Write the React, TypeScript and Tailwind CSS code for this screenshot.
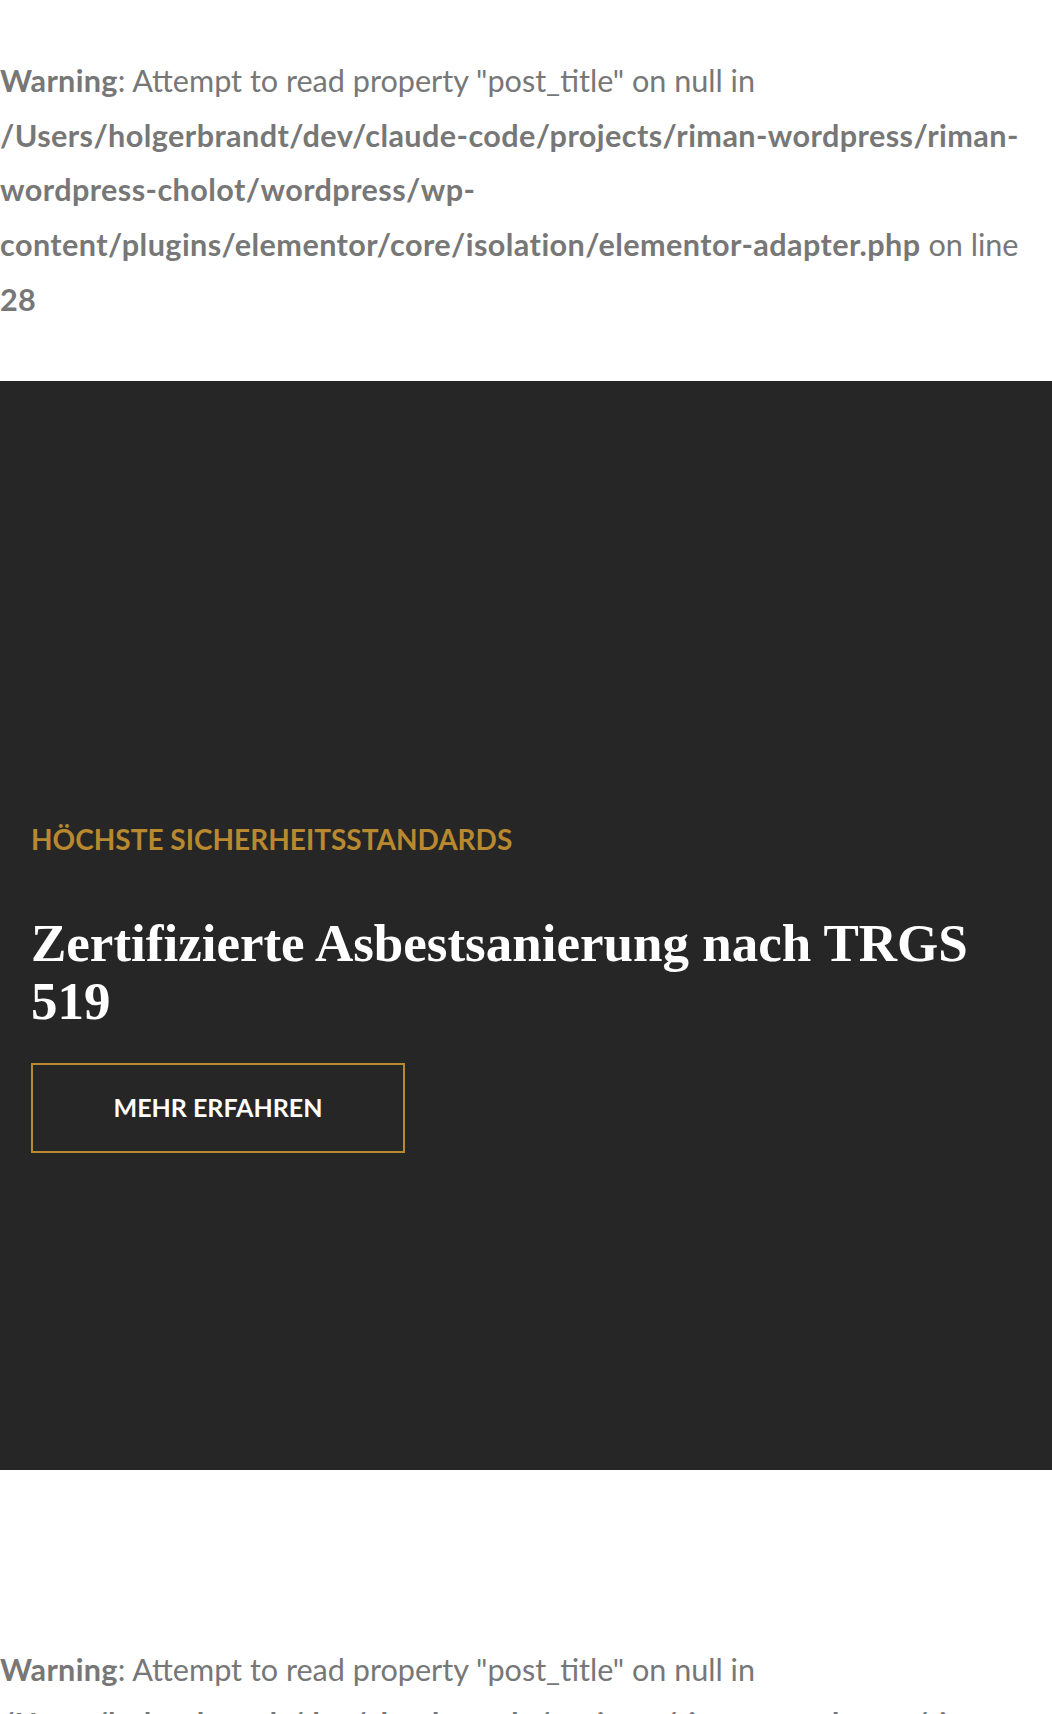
import React from "react";

function WarningBlock() {
  return (
    <p className="whitespace-nowrap font-['Lato','Liberation_Sans',sans-serif] text-[30.6px] leading-[54.7px] text-[#777777]">
      <b className="font-bold tracking-[0.3px]">Warning</b>: Attempt to read property "post_title" on null in
      <br />
      <b className="font-bold tracking-[0.42px]">
        /Users/holgerbrandt/dev/claude-code/projects/riman-wordpress/riman-
        <br />
        wordpress-cholot/wordpress/wp-
        <br />
        content/plugins/elementor/core/isolation/elementor-adapter.php
      </b>{" "}
      on line
      <br />
      <b className="font-bold tracking-[0.3px]">28</b>
    </p>
  );
}

export default function App() {
  return (
    <div className="w-[1052px] overflow-hidden bg-white">
      <div className="pt-[54px] pb-[53px]">
        <WarningBlock />
      </div>

      <section className="bg-[#262626] pl-[31px] pt-[444px] pb-[317px]">
        <p className="font-['Lato','Liberation_Sans',sans-serif] text-[28px] font-bold uppercase leading-[28px] text-[#b8892e]">
          Höchste Sicherheitsstandards
        </p>
        <h2 className="mt-[61px] whitespace-nowrap font-['Liberation_Serif','Times_New_Roman',serif] text-[53px] font-bold leading-[58px] text-white">
          Zertifizierte Asbestsanierung nach TRGS
          <br />
          519
        </h2>
        <a
          href="#"
          className="mt-[33px] flex h-[90px] w-[374px] items-center justify-center border-2 border-[#b8892e] font-['Lato','Liberation_Sans',sans-serif] text-[25px] font-bold uppercase text-white"
        >
          Mehr erfahren
        </a>
      </section>

      <div className="pt-[173px]">
        <WarningBlock />
      </div>
    </div>
  );
}
